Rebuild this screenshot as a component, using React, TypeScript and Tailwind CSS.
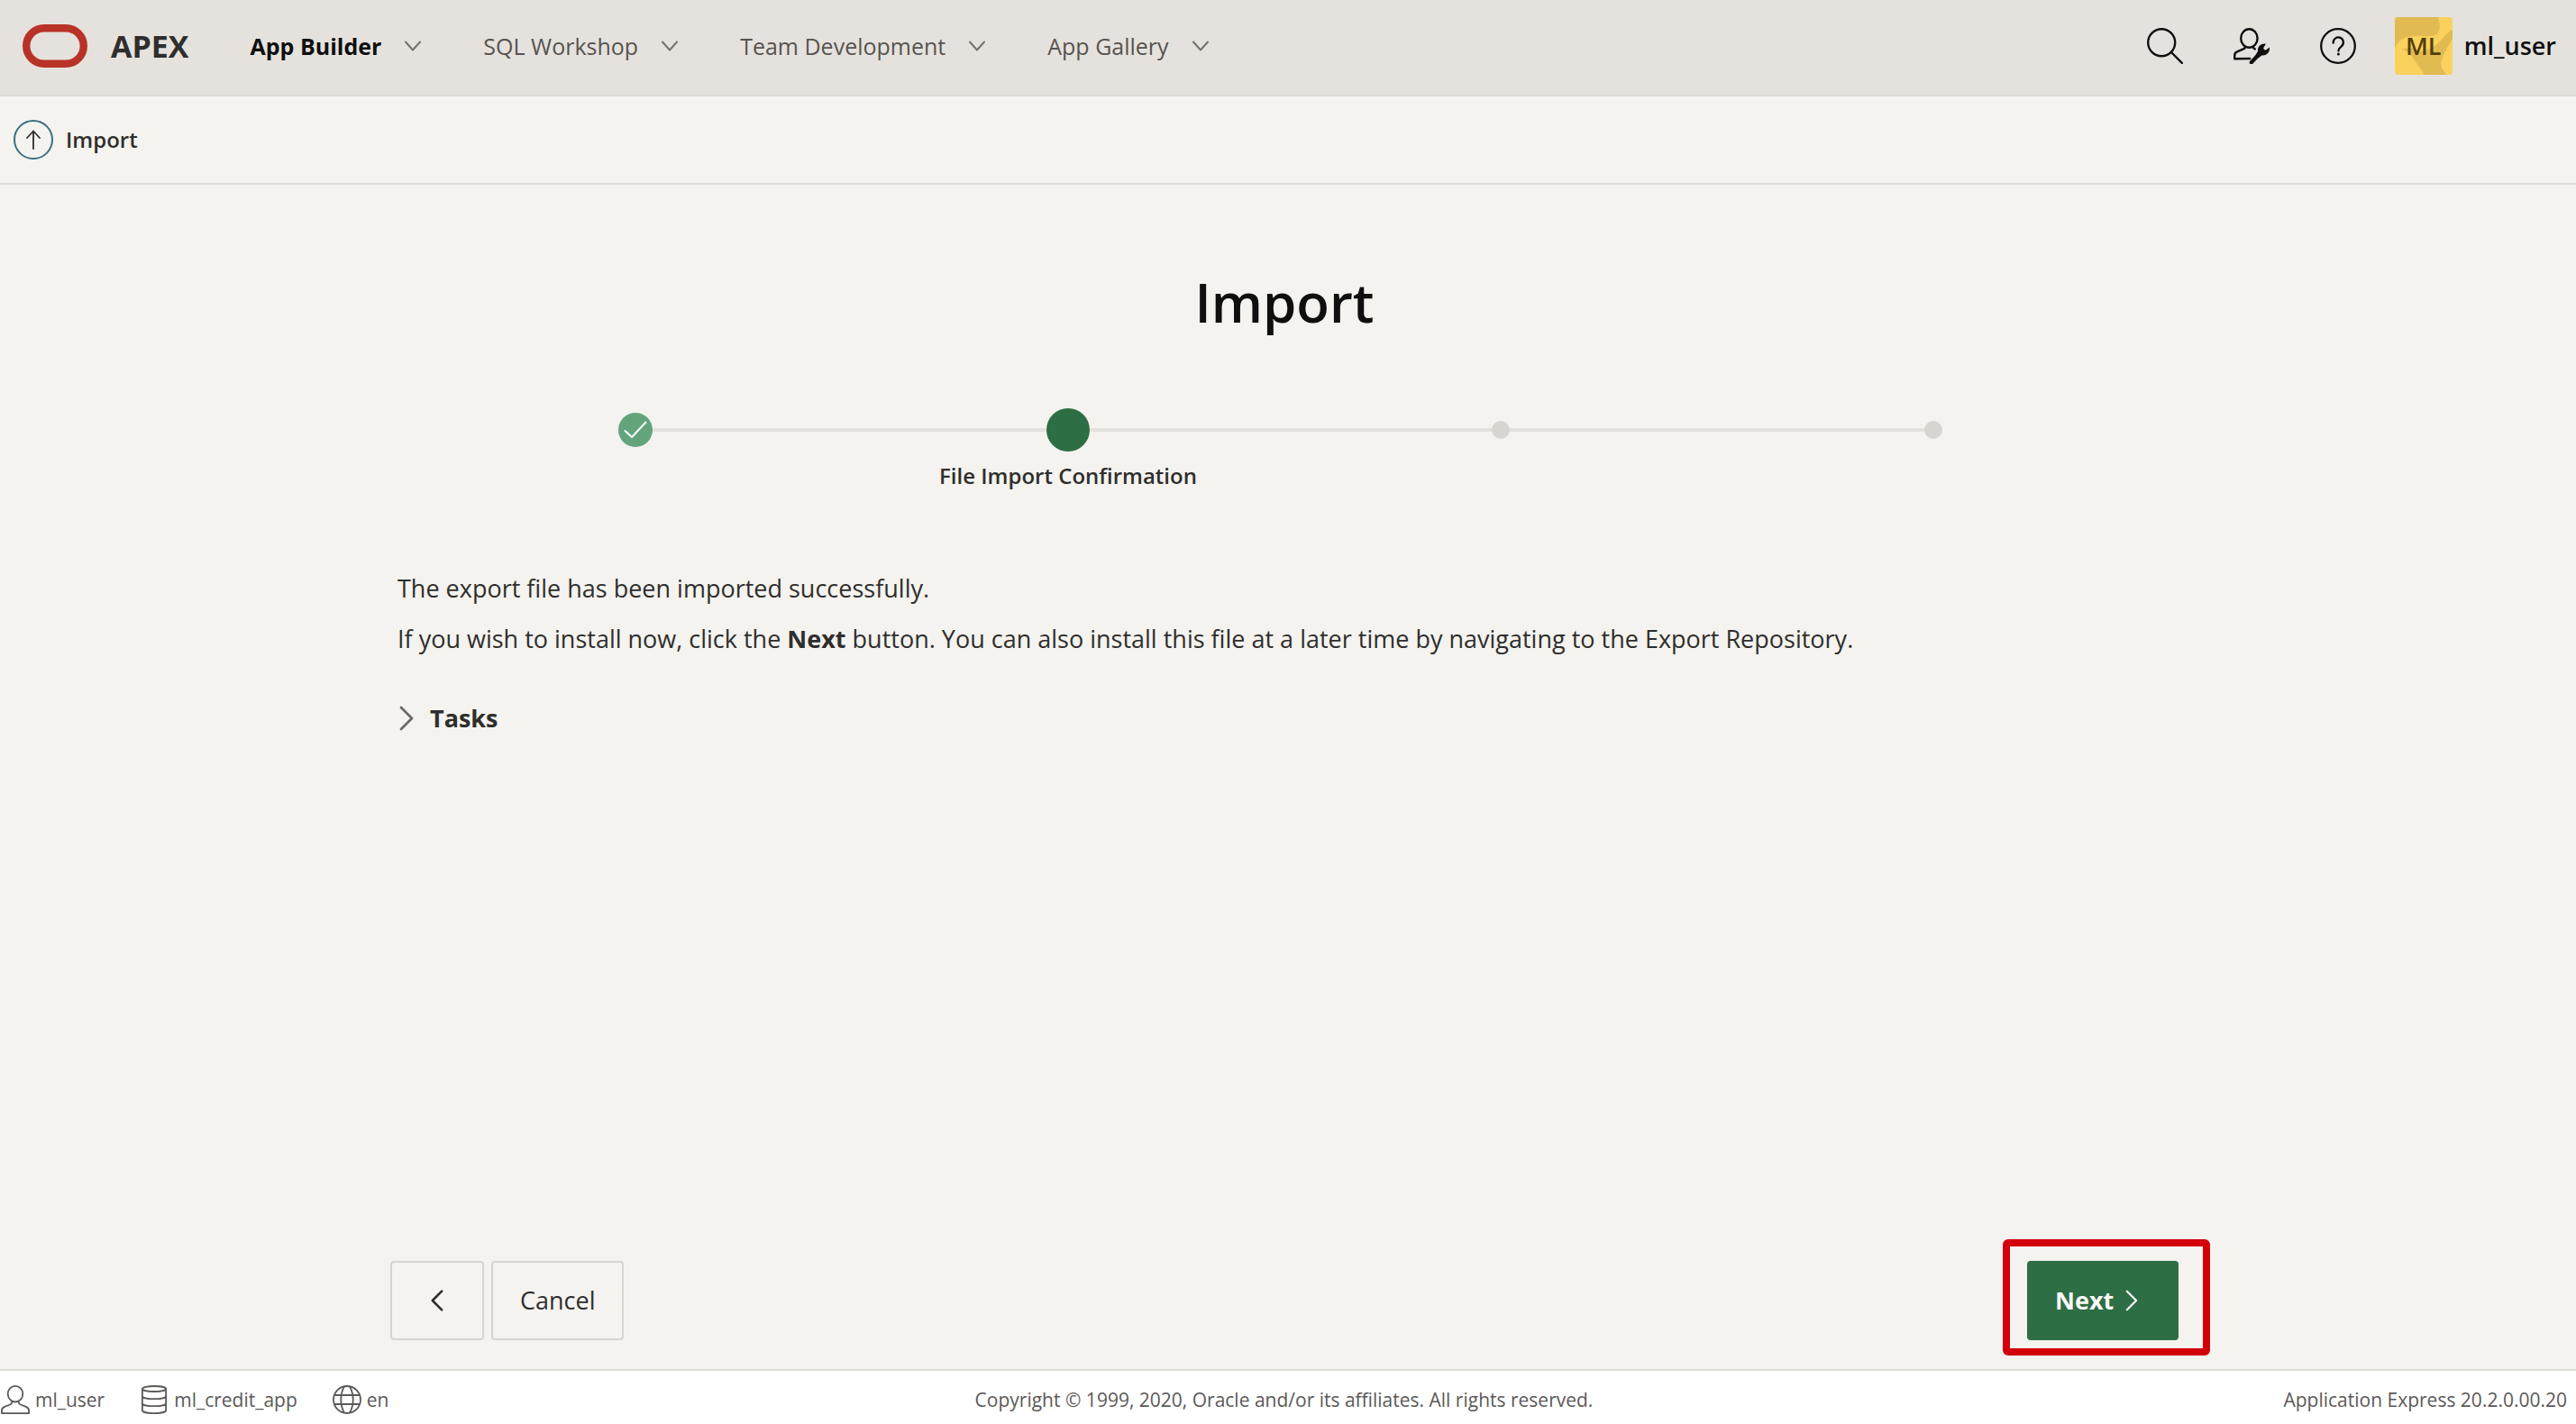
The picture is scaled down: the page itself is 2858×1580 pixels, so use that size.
import React from "react";

type IconProps = { className?: string };

function ChevronDown({ className = "" }: IconProps) {
  return (
    <svg viewBox="0 0 18 12" className={className} fill="none" stroke="currentColor" strokeWidth="2" strokeLinecap="round" strokeLinejoin="round" aria-hidden="true">
      <path d="M1 1.5 9 10.5 17 1.5" />
    </svg>
  );
}

function ChevronRight({ className = "", weight = 2.4 }: IconProps & { weight?: number }) {
  return (
    <svg viewBox="0 0 16 28" className={className} fill="none" stroke="currentColor" strokeWidth={weight} strokeLinecap="round" strokeLinejoin="round" aria-hidden="true">
      <path d="M2 2 14 14 2 26" />
    </svg>
  );
}

function SearchIcon() {
  return (
    <svg viewBox="0 0 40 40" className="size-10" fill="none" stroke="currentColor" strokeWidth="2.4" strokeLinecap="round" aria-hidden="true">
      <circle cx="16.2" cy="16.2" r="15" />
      <path d="M27 27 38.8 38.8" />
    </svg>
  );
}

function UserWrenchIcon() {
  return (
    <svg viewBox="0 0 40 40" className="size-10" fill="none" stroke="currentColor" strokeWidth="2.4" strokeLinecap="round" strokeLinejoin="round" aria-hidden="true">
      <ellipse cx="17.4" cy="11.5" rx="9.2" ry="10.3" />
      <path d="M13 20.6c.2 1.6-.6 2.2-2 2.8l-7 2.9c-1.9.8-2.8 2.2-2.8 4.4v3.500l17-.2M21.600 20.800c0 1.200.600 1.800 2.200 2.600" />
      <path d="M19.800 38.200 29.500 28" strokeWidth="4.2" />
      <path stroke="none" fill="currentColor" d="M35.900 17.700c-5.400-.7-9.500 2.900-8.800 8l-2.900 4.700 3.300 3 3.700-2.900c5.200.7 9.400-3.300 8.700-8.900l-3.500 2.700c-1.600.9-3.600-.8-3-2.600Z" />
    </svg>
  );
}

function HelpIcon() {
  return (
    <svg viewBox="0 0 40 40" className="size-10" fill="none" stroke="currentColor" strokeWidth="2.3" strokeLinecap="round" aria-hidden="true">
      <circle cx="20" cy="20" r="18.8" />
      <path d="M14.7 16.7v-.6a5.6 5.600 0 1 1 9.300 4.100c-2.200 1.900-3.500 2.800-3.500 5.400" />
      <circle cx="20.4" cy="29" r="1.5" fill="currentColor" stroke="none" />
    </svg>
  );
}

function UserIcon() {
  return (
    <svg viewBox="0 0 32 32" className="size-8" fill="none" stroke="currentColor" strokeWidth="1.8" strokeLinejoin="round" aria-hidden="true">
      <ellipse cx="16" cy="9.7" rx="8.3" ry="8.8" />
      <path d="M12.4 17.8c.2 2.2-.6 3-2.300 3.700l-6 2.300C1.900 24.700.900 26 .900 28.200v2.900h30.200v-2.900c0-2.200-1-3.500-3.200-4.400l-6-2.300c-1.700-.7-2.500-1.500-2.300-3.700" />
    </svg>
  );
}

function DatabaseIcon() {
  return (
    <svg viewBox="0 0 32 32" className="size-8" fill="none" stroke="currentColor" strokeWidth="1.8" aria-hidden="true">
      <ellipse cx="16" cy="4" rx="13.1" ry="3" />
      <path d="M2.9 4v24c0 1.700 5.900 3.100 13.100 3.100s13.100-1.400 13.100-3.100V4M2.900 12.200c0 1.700 5.900 3 13.100 3s13.100-1.300 13.100-3M2.900 20.200c0 1.700 5.900 3 13.100 3s13.100-1.300 13.100-3" />
    </svg>
  );
}

function GlobeIcon() {
  return (
    <svg viewBox="0 0 32 32" className="size-8" fill="none" stroke="currentColor" strokeWidth="1.8" aria-hidden="true">
      <circle cx="16" cy="16" r="15" />
      <path d="M2.200 11h27.600M2.200 21h27.600M13 1.400c-5 9-5 20.200 0 29.200M19 1.400c5 9 5 20.200 0 29.200" />
    </svg>
  );
}

function Avatar() {
  return (
    <span className="relative grid size-16 place-items-center overflow-hidden rounded bg-[#fad15c]">
      <svg viewBox="0 0 64 64" className="absolute inset-0 size-16" fill="#e1ba52" aria-hidden="true">
        <path d="M0 0h48c2 7 3 14-1 19-7 4-18 1-27 2C9 22 4 26 0 34Z" />
        <path d="M64 14c-6 3-10 9-15 14-6 6-13 9-21 10-7-6-15-4-21-2 7 1 11 5 15 12l11 16h24c-4-7-6-8-6-12 1-8 7-18 13-28Z" />
      </svg>
      <span className="relative text-[27px] leading-8 font-semibold text-[#523f08]">ML</span>
    </span>
  );
}

const NAV = [
  { label: "App Builder", active: true },
  { label: "SQL Workshop", active: false },
  { label: "Team Development", active: false },
  { label: "App Gallery", active: false },
];

function Header() {
  return (
    <header className="flex items-center justify-between border-b-2 border-[#dedcd7] bg-[#e5e2dd] pt-[19px] pr-[22px] pb-[22px] pl-[25px]">
      <div className="flex items-center">
        <a href="#home" className="flex items-center gap-[26px] text-[#2f2e2d]">
          <svg viewBox="0 0 72 48" className="h-12 w-[72px]" fill="none" stroke="#b93228" strokeWidth="8.4" aria-hidden="true">
            <rect x="4.2" y="4.2" width="63.6" height="39.6" rx="19.8" />
          </svg>
          <span className="text-[34px] leading-10 font-bold">APEX</span>
        </a>
        <nav className="ml-[68px] flex items-center gap-[69px]" aria-label="Main">
          {NAV.map((n) => (
            <div key={n.label} className="flex items-center gap-[26px]">
              <a href="#nav" className={n.active ? "text-[25px] leading-9 font-bold text-[#0f0f0f]" : "text-[25px] leading-9 text-[#575450]"}>
                {n.label}
              </a>
              <button type="button" aria-label={n.label + " menu"} className="text-[#75726e]">
                <ChevronDown className="h-3 w-[18px]" />
              </button>
            </div>
          ))}
        </nav>
      </div>
      <div className="flex items-center text-[#0f0f0f]">
        <div className="mr-[43px] flex items-center gap-14">
          <button type="button" aria-label="Search"><SearchIcon /></button>
          <button type="button" aria-label="Administration"><UserWrenchIcon /></button>
          <button type="button" aria-label="Help"><HelpIcon /></button>
        </div>
        <button type="button" className="flex items-center gap-[13px]">
          <Avatar />
          <span className="text-[27px] leading-9 font-semibold">ml_user</span>
        </button>
      </div>
    </header>
  );
}

function StepMarker({ state }: { state: string }) {
  if (state === "done") {
    return (
      <span className="relative grid size-[38px] place-items-center rounded-full bg-[#63a47c]">
        <svg viewBox="0 0 26 20" className="h-5 w-[26px]" fill="none" stroke="#fff" strokeWidth="2" strokeLinecap="round" strokeLinejoin="round" aria-hidden="true">
          <path d="M1.5 11 9 18 24.5 1.5" />
        </svg>
      </span>
    );
  }
  if (state === "current") return <span className="relative size-12 rounded-full bg-[#2d6e44]" />;
  return <span className="relative size-5 rounded-full bg-[#d8d4cf]" />;
}

const STEPS = [
  { state: "done", label: "" },
  { state: "current", label: "File Import Confirmation" },
  { state: "todo", label: "" },
  { state: "todo", label: "" },
];

function Steps() {
  return (
    <ol className="mx-8 mt-[78px] grid grid-cols-4">
      {STEPS.map((s, i) => (
        <li key={i} className="flex flex-col items-center">
          <div className="relative grid h-12 w-full place-items-center">
            {i < STEPS.length - 1 && <span className="absolute left-1/2 h-1 w-full bg-[#e4e2dd]" />}
            <StepMarker state={s.state} />
          </div>
          <span className="mt-[11px] h-8 text-[24px] leading-8 font-semibold whitespace-nowrap">{s.label}</span>
        </li>
      ))}
    </ol>
  );
}

export default function App() {
  return (
    <div className="flex min-h-screen flex-col bg-[#f4f3ef] font-['Open_Sans','Noto_Sans',sans-serif] text-[#2f2e2d]">
      <Header />
      <div className="flex items-center gap-[14px] border-b-2 border-[#dedcd7] px-[15px] py-[26px]">
        <button type="button" aria-label="Go up" className="grid size-11 place-items-center rounded-full border-2 border-[#3b6f7d]">
          <svg viewBox="0 0 18 22" className="h-[22px] w-[18px]" fill="none" stroke="currentColor" strokeWidth="1.8" strokeLinecap="round" strokeLinejoin="round" aria-hidden="true">
            <path d="M9 21V1.5M2 9 9 1.5 16 9" />
          </svg>
        </button>
        <span className="text-[24px] leading-8 font-semibold">Import</span>
      </div>

      <main className="flex flex-1 flex-col pr-2 pb-8">
        <div className="mx-auto flex w-full max-w-[1984px] flex-1 flex-col pt-[90px]">
          <h1 className="text-center text-[60px] leading-[80px] font-semibold text-[#0f0f0f]">Import</h1>
          <Steps />
          <div className="mt-[81px] px-2 text-[27px] leading-[56px]">
            <p>The export file has been imported successfully.</p>
            <p>
              If you wish to install now, click the <strong className="font-bold">Next</strong> button. You can also install this file at a later time by navigating to the Export Repository.
            </p>
          </div>
          <button type="button" aria-expanded="false" className="mt-10 flex items-center gap-[18px] self-start px-[10px] text-[27px] leading-10 font-bold">
            <ChevronRight className="h-7 w-4 text-[#6b6967]" weight={2.8} />
            Tasks
          </button>
          <div className="mt-auto flex justify-between pt-10">
            <div className="flex gap-2">
              <button type="button" aria-label="Previous" className="grid h-[88px] w-[104px] place-items-center rounded border-2 border-[#d6d4cf]">
                <ChevronRight className="h-6 w-[14px] rotate-180" weight={3} />
              </button>
              <button type="button" className="h-[88px] rounded border-2 border-[#d6d4cf] px-[30px] text-[27px] leading-10">
                Cancel
              </button>
            </div>
            <div className="relative">
              <button type="button" className="flex h-[88px] w-[168px] items-center gap-[13px] rounded bg-[#2d6e44] pl-[31px] text-[27px] leading-10 font-bold text-[#fbf9f8]">
                Next
                <ChevronRight className="h-6 w-[14px]" weight={2.6} />
              </button>
              <span className="pointer-events-none absolute -top-6 -right-[35px] -bottom-[17px] -left-[27px] rounded-md border-8 border-[#d2000b]" />
            </div>
          </div>
        </div>
      </main>

      <footer className="grid grid-cols-[1fr_auto_1fr] items-center border-t-2 border-[#dedcd7] bg-white pt-4 pr-[10px] pb-[11px] pl-px text-[21px] leading-8 text-[#5b5957]">
        <ul className="flex items-center gap-[39px]">
          <li className="flex items-center gap-[6px]"><UserIcon />ml_user</li>
          <li className="flex items-center gap-[6px]"><DatabaseIcon />ml_credit_app</li>
          <li className="flex items-center gap-[6px]"><GlobeIcon />en</li>
        </ul>
        <p>Copyright © 1999, 2020, Oracle and/or its affiliates. All rights reserved.</p>
        <p className="text-right">Application Express 20.2.0.00.20</p>
      </footer>
    </div>
  );
}
